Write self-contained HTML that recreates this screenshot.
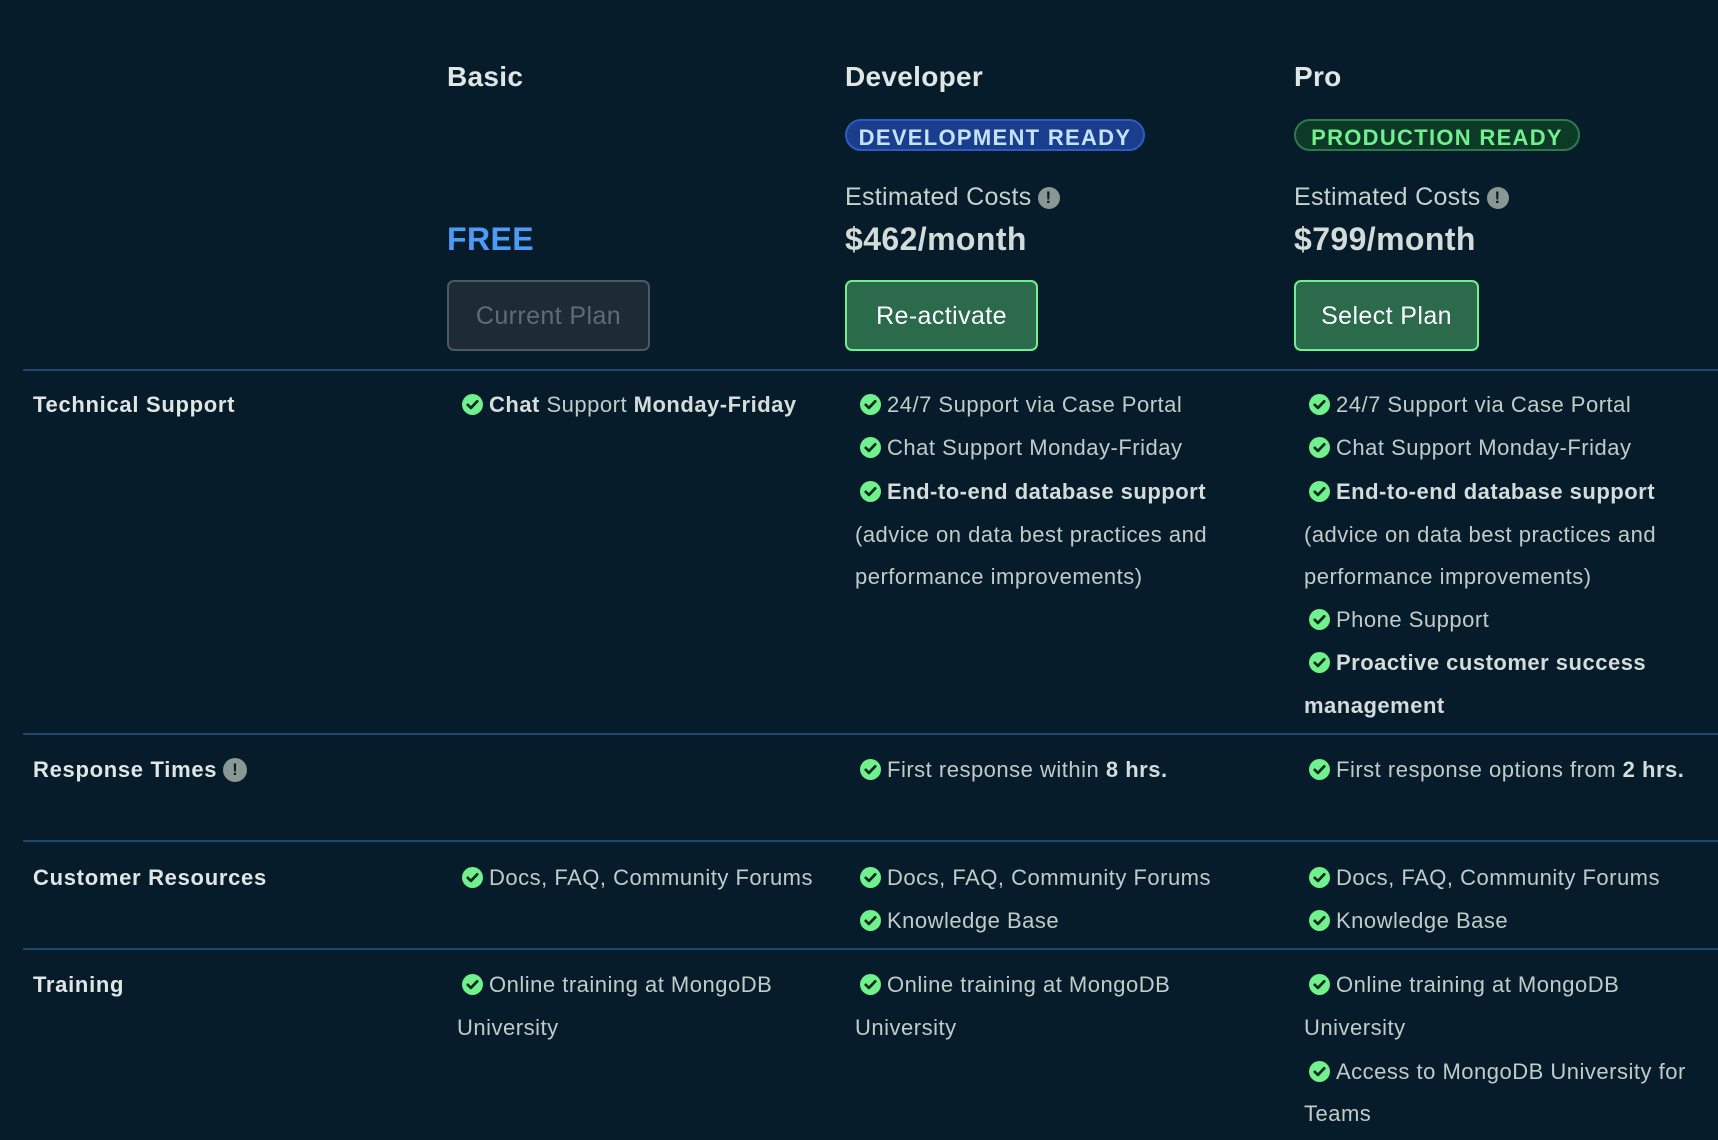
<!DOCTYPE html>
<html><head><meta charset="utf-8"><style>
body{margin:0;width:1718px;height:1140px;background:#061c2b;overflow:hidden;font-family:"Liberation Sans",sans-serif;color:#c1ccc8;position:relative}
.a{position:absolute;white-space:nowrap}
.t{position:absolute;white-space:nowrap;height:44px;line-height:46px;font-size:22px;letter-spacing:0.5px}
.t svg{vertical-align:-3px;margin-right:6px}
.l{position:absolute;left:23px;right:0;height:2px;background:#1d476b}
b{color:#d5ddda}
.h{font-size:28px;font-weight:bold;color:#dfe6e3;top:61px;letter-spacing:0.3px}
.lbl{font-size:22px;font-weight:bold;color:#dfe6e3;height:44px;line-height:46px;letter-spacing:0.7px}
.badge{top:119px;height:32px;line-height:33px;border-radius:18px;font-size:22px;font-weight:bold;letter-spacing:1.3px;text-align:center;box-sizing:border-box}
.ec{top:183px;font-size:25px;color:#c8d1cd;letter-spacing:0.3px}
.pr{top:221px;font-size:32px;font-weight:bold;color:#d3dcd8;letter-spacing:0.4px}
.btn{top:280px;height:71px;line-height:68px;border-radius:7px;box-sizing:border-box;font-size:25px;text-align:center;letter-spacing:0.4px}
.g{background:#2b6a4b;border:2px solid #6ef08c;color:#fff}
.info{display:inline-block;width:22px;height:22px;border-radius:50%;background:#8a9894;color:#061c2b;font-size:17px;font-weight:bold;text-align:center;line-height:22px;vertical-align:2px;margin-left:6px}
</style></head><body>
<svg width="0" height="0" style="position:absolute"><defs><symbol id="c" viewBox="0 0 20 20"><circle cx="10" cy="10" r="10" fill="#71f08e"/><path d="M5.5 10.3l3 3 6-6.3" stroke="#0a2a1c" stroke-width="2.6" fill="none" stroke-linecap="round" stroke-linejoin="round"/></symbol></defs></svg>

<div class="a h" style="left:447px">Basic</div>
<div class="a h" style="left:845px">Developer</div>
<div class="a h" style="left:1294px">Pro</div>

<div class="a badge" style="left:845px;width:300px;background:#1b3d8e;border:2px solid #2d5cc0;color:#c4e3ff">DEVELOPMENT READY</div>
<div class="a badge" style="left:1294px;width:286px;background:#0c3a27;border:2px solid #2c7a4c;color:#71f08e">PRODUCTION READY</div>

<div class="a ec" style="left:845px">Estimated Costs<span class="info">!</span></div>
<div class="a ec" style="left:1294px">Estimated Costs<span class="info">!</span></div>
<div class="a pr" style="left:447px;color:#4c9cf6">FREE</div>
<div class="a pr" style="left:845px">$462/month</div>
<div class="a pr" style="left:1294px">$799/month</div>

<div class="a btn" style="left:447px;width:203px;background:#1f2b34;border:2px solid #4b5962;color:#5e6c76">Current Plan</div>
<div class="a btn g" style="left:845px;width:193px">Re-activate</div>
<div class="a btn g" style="left:1294px;width:185px">Select Plan</div>

<div class="l" style="top:369px"></div>
<div class="l" style="top:733px"></div>
<div class="l" style="top:840px"></div>
<div class="l" style="top:948px"></div>

<div class="a lbl" style="left:33px;top:382px">Technical Support</div>
<div class="a lbl" style="left:33px;top:747px">Response Times<span class="info" style="width:24px;height:24px;line-height:24px">!</span></div>
<div class="a lbl" style="left:33px;top:855px">Customer Resources</div>
<div class="a lbl" style="left:33px;top:962px">Training</div>

<!-- Basic -->
<div class="t" style="left:462px;top:382px"><svg width="21" height="21"><use href="#c"/></svg><b>Chat</b> Support <b>Monday-Friday</b></div>
<div class="t" style="left:462px;top:855px"><svg width="21" height="21"><use href="#c"/></svg>Docs, FAQ, Community Forums</div>
<div class="t" style="left:462px;top:962px"><svg width="21" height="21"><use href="#c"/></svg>Online training at MongoDB</div>
<div class="t" style="left:457px;top:1005px">University</div>

<!-- Developer -->
<div class="t" style="left:860px;top:382px"><svg width="21" height="21"><use href="#c"/></svg>24/7 Support via Case Portal</div>
<div class="t" style="left:860px;top:425px"><svg width="21" height="21"><use href="#c"/></svg>Chat Support Monday-Friday</div>
<div class="t" style="left:860px;top:469px"><svg width="21" height="21"><use href="#c"/></svg><b>End-to-end database support</b></div>
<div class="t" style="left:855px;top:512px">(advice on data best practices and</div>
<div class="t" style="left:855px;top:554px">performance improvements)</div>
<div class="t" style="left:860px;top:747px"><svg width="21" height="21"><use href="#c"/></svg>First response within <b>8 hrs.</b></div>
<div class="t" style="left:860px;top:855px"><svg width="21" height="21"><use href="#c"/></svg>Docs, FAQ, Community Forums</div>
<div class="t" style="left:860px;top:898px"><svg width="21" height="21"><use href="#c"/></svg>Knowledge Base</div>
<div class="t" style="left:860px;top:962px"><svg width="21" height="21"><use href="#c"/></svg>Online training at MongoDB</div>
<div class="t" style="left:855px;top:1005px">University</div>

<!-- Pro -->
<div class="t" style="left:1309px;top:382px"><svg width="21" height="21"><use href="#c"/></svg>24/7 Support via Case Portal</div>
<div class="t" style="left:1309px;top:425px"><svg width="21" height="21"><use href="#c"/></svg>Chat Support Monday-Friday</div>
<div class="t" style="left:1309px;top:469px"><svg width="21" height="21"><use href="#c"/></svg><b>End-to-end database support</b></div>
<div class="t" style="left:1304px;top:512px">(advice on data best practices and</div>
<div class="t" style="left:1304px;top:554px">performance improvements)</div>
<div class="t" style="left:1309px;top:597px"><svg width="21" height="21"><use href="#c"/></svg>Phone Support</div>
<div class="t" style="left:1309px;top:640px"><svg width="21" height="21"><use href="#c"/></svg><b>Proactive customer success</b></div>
<div class="t" style="left:1304px;top:683px"><b>management</b></div>
<div class="t" style="left:1309px;top:747px"><svg width="21" height="21"><use href="#c"/></svg>First response options from <b>2 hrs.</b></div>
<div class="t" style="left:1309px;top:855px"><svg width="21" height="21"><use href="#c"/></svg>Docs, FAQ, Community Forums</div>
<div class="t" style="left:1309px;top:898px"><svg width="21" height="21"><use href="#c"/></svg>Knowledge Base</div>
<div class="t" style="left:1309px;top:962px"><svg width="21" height="21"><use href="#c"/></svg>Online training at MongoDB</div>
<div class="t" style="left:1304px;top:1005px">University</div>
<div class="t" style="left:1309px;top:1049px"><svg width="21" height="21"><use href="#c"/></svg>Access to MongoDB University for</div>
<div class="t" style="left:1304px;top:1091px">Teams</div>
</body></html>
